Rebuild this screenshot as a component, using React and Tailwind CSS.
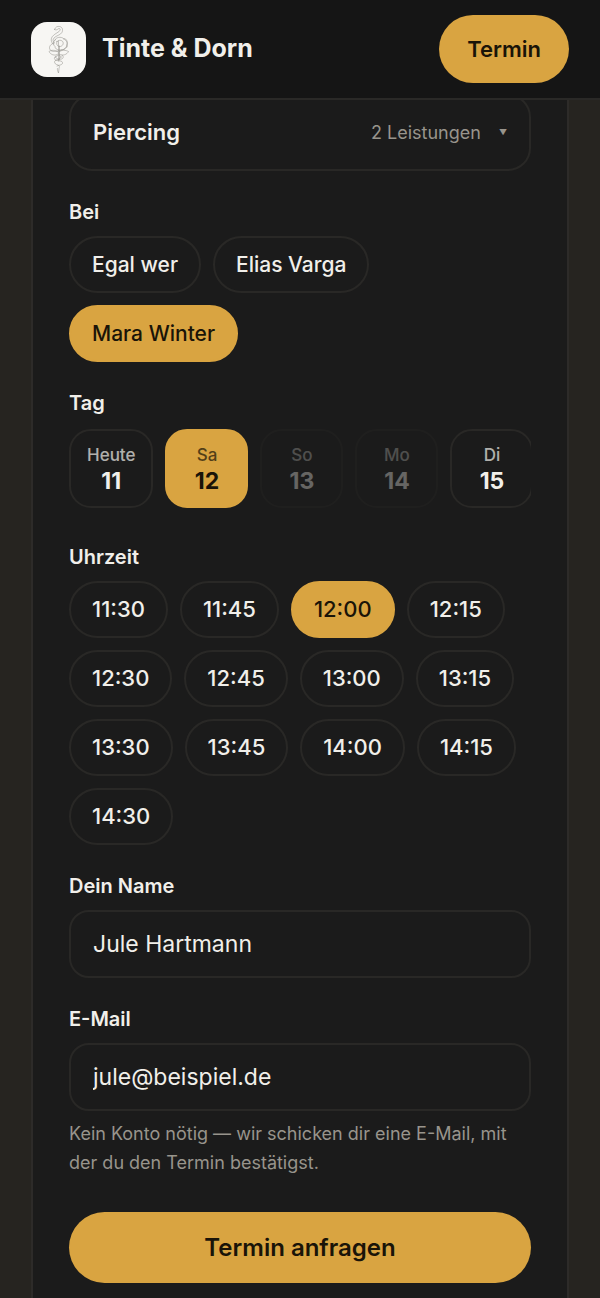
import { useState } from 'react';

const STAFF = ['Egal wer', 'Elias Varga', 'Mara Winter'];

const DAYS = [
  { id: 11, label: 'Heute' },
  { id: 12, label: 'Sa' },
  { id: 13, label: 'So', closed: true },
  { id: 14, label: 'Mo', closed: true },
  { id: 15, label: 'Di' },
];

const TIMES = [
  '11:30', '11:45', '12:00', '12:15', '12:30', '12:45', '13:00',
  '13:15', '13:30', '13:45', '14:00', '14:15', '14:30',
];

const INPUT =
  'block w-full h-[68px] rounded-[20px] border-2 border-[#292826] bg-[#1b1b1b] px-[22px] text-[23px] text-[#f1efea] outline-none focus:border-[#d9a441]';

// Snake wound around a dagger and a rose
function Logo() {
  return (
    <svg viewBox="0 0 55 55" className="size-[55px] shrink-0 rounded-2xl bg-[#f7f6f3]" aria-hidden="true">
      <g fill="none" stroke="#8d8a85" strokeWidth="0.5" strokeLinecap="round" strokeLinejoin="round">
        <path d="M23.5 7.5c.7-2.400 3-3.600 5.200-3 2.800.7 3.500 3.500 2.300 5.800-1.500 2.900-5.800 3.200-8 5.700-1.300 1.600-1.200 3.400.3 5" />
        <path d="M23.5 7.5c1.400.8 2.700.3 3.600-.6 1.100-1 2.400-.1 2 1.200-.7 2.300-5.600 3.300-7.800 6.500-1.600 2.400-1.300 5.400.8 7.500" />
        <path d="M24 18c1-3 6-3.500 8.500-1.500 3.500 0 4.500 4 3 6.500.5 3-2.500 5-5 4.500-3 1.500-6.500-.5-6.500-3-2-1.500-2-5 0-6.500z" />
        <path d="M26 19.500c1.500-2 5-1.500 6 .5 1 2.500-1.500 5-4 4.500-2-.5-3-3-2-5z" />
        <path d="M23 21c-3.500 1-5.500 4-4 6.500 1.500 2.500 5 2 8 1.500s7-1 8.500-4M32.500 17c3.500 1 5 5 3.500 8" />
        <path d="M27 30c-3-2.500-7-2-9-.5 1.500 3 5.500 5 9 2.500M28 30c3-2.500 6.500-2 9.500-.5-1.500 3-6 5-9.500 2.500" />
        <path d="M27.500 19v20M28.500 24v14M25 34c-2.500 1-2 4 .5 4.500 2.500.5 5.500 0 6 2 .5 2.500-3.500 2.500-5.500 3.500" />
        <path d="M31 33c2 1.200 1.500 3.500-.5 4s-6 .2-6.800 2.300c-.6 2 1.300 3.400 3.300 3.700 1.800.4 1.500 2 1 3.500-.4 1.400 0 3-.5 4.500-.6-1.300-1.300-3-1.100-4.500" />
        <path d="M24.500 35l3-2 3 2-3 2z" />
      </g>
    </svg>
  );
}

function Chip({ active, size, onClick, children }) {
  return (
    <button
      type="button"
      aria-pressed={active}
      onClick={onClick}
      className={`h-[57px] rounded-full border-2 px-[21px] font-medium cursor-pointer ${size} ${
        active ? 'border-[#d9a441] bg-[#d9a441] text-[#1a1408]' : 'border-[#292826] text-[#f1efea]'
      }`}
    >
      {children}
    </button>
  );
}

function Group({ title, children }) {
  return (
    <fieldset className="mt-[25px] min-w-0">
      <legend className="mb-2 text-xl leading-8 font-semibold">{title}</legend>
      {children}
    </fieldset>
  );
}

function DayButton({ day, active, onClick }) {
  return (
    <button
      type="button"
      disabled={day.closed}
      aria-pressed={active}
      onClick={onClick}
      className={`flex h-[79px] min-w-[83px] shrink-0 flex-col items-center justify-center rounded-[22px] border-2 px-4 disabled:opacity-35 ${
        active ? 'border-[#d9a441] bg-[#d9a441] text-[#1a1408]' : 'border-[#292826] text-[#f1efea]'
      }`}
    >
      <span className="text-[17px] leading-6 font-medium opacity-70">{day.label}</span>
      <span className="text-[23px] leading-7 font-bold">{day.id}</span>
    </button>
  );
}

export default function App() {
  const [staff, setStaff] = useState('Mara Winter');
  const [day, setDay] = useState(12);
  const [time, setTime] = useState('12:00');
  const [name, setName] = useState('Jule Hartmann');
  const [email, setEmail] = useState('jule@beispiel.de');

  return (
    <div className="flex min-h-screen flex-col bg-[#262420] font-['Inter','Liberation_Sans',sans-serif] text-[#f1efea]">
      <header className="sticky top-0 z-10 flex h-[100px] shrink-0 items-center justify-between border-b-2 border-[#2a2927] bg-[#151515] px-[31px]">
        <a href="#start" className="flex items-center gap-4 text-[25px] font-bold">
          <Logo />
          Tinte &amp; Dorn
        </a>
        <button type="button" className="h-[68px] rounded-full bg-[#d9a441] px-7 text-[22px] font-semibold text-[#1a1408] cursor-pointer">
          Termin
        </button>
      </header>

      {/* The form starts tucked slightly under the header */}
      <main className="-mt-1.5 flex flex-1 flex-col px-[31px]">
        <form className="flex-1 border-x-2 border-[#2d2b29] bg-[#1b1b1b] px-9 pb-3" onSubmit={e => e.preventDefault()}>
          <button
            type="button"
            aria-expanded="false"
            className="flex h-[77px] w-full items-center justify-between rounded-[23px] border-2 border-[#292826] px-[22px] cursor-pointer"
          >
            <span className="text-[22px] font-semibold">Piercing</span>
            <span className="flex items-center gap-[18px] text-lg text-[#98948c]">
              2 Leistungen
              <span className="text-[8px]">▼</span>
            </span>
          </button>

          <Group title="Bei">
            <div className="flex flex-wrap gap-3">
              {STAFF.map(s => (
                <Chip key={s} size="text-[21px]" active={s === staff} onClick={() => setStaff(s)}>{s}</Chip>
              ))}
            </div>
          </Group>

          <Group title="Tag">
            <div className="flex gap-3 overflow-x-auto pt-0.5 pb-2 [scrollbar-width:none]">
              {DAYS.map(d => (
                <DayButton key={d.id} day={d} active={d.id === day} onClick={() => setDay(d.id)} />
              ))}
            </div>
          </Group>

          <Group title="Uhrzeit">
            <div className="flex flex-wrap gap-3">
              {TIMES.map(t => (
                <Chip key={t} size="text-[22px]" active={t === time} onClick={() => setTime(t)}>{t}</Chip>
              ))}
            </div>
          </Group>

          <div className="mt-[25px]">
            <label htmlFor="name" className="mb-2 block text-xl leading-8 font-semibold">Dein Name</label>
            <input id="name" type="text" className={INPUT} value={name} onChange={e => setName(e.target.value)} />
          </div>

          <div className="mt-[25px]">
            <label htmlFor="email" className="mb-2 block text-xl leading-8 font-semibold">E-Mail</label>
            <input id="email" type="email" className={INPUT} value={email} onChange={e => setEmail(e.target.value)} />
            <p className="mt-2 text-lg leading-[29px] text-[#98948c]">
              Kein Konto nötig — wir schicken dir eine E-Mail, mit der du den Termin bestätigst.
            </p>
          </div>

          <button type="submit" className="mt-[35px] h-[71px] w-full rounded-full bg-[#d9a441] text-2xl font-semibold text-[#1a1408] cursor-pointer">
            Termin anfragen
          </button>
        </form>
      </main>
    </div>
  );
}
